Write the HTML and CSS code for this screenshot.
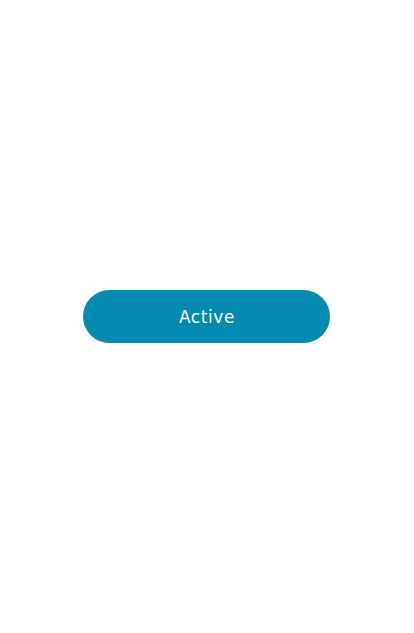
FILE: index.html
```html
<!DOCTYPE html>
<html>
<head>
<meta charset="utf-8">
<link rel="stylesheet" href="styles.css">
</head>
<body>
<main class="stage">
  <button class="btn">Active</button>
</main>
</body>
</html>
```
FILE: styles.css
```css
html, body { margin: 0; padding: 0; background: #fff; }
.stage {
  box-sizing: border-box;
  width: 414px;
  height: 633px;
  padding-right: 1px;
  display: flex;
  align-items: center;
  justify-content: center;
}
.btn {
  width: 247px;
  height: 53px;
  border: none;
  border-radius: 27px;
  background: #008bae;
  color: #fff;
  font-family: "DejaVu Sans", sans-serif;
  font-size: 17px;
  letter-spacing: 0.6px;
  padding: 0 0 0 1px;
}
```
